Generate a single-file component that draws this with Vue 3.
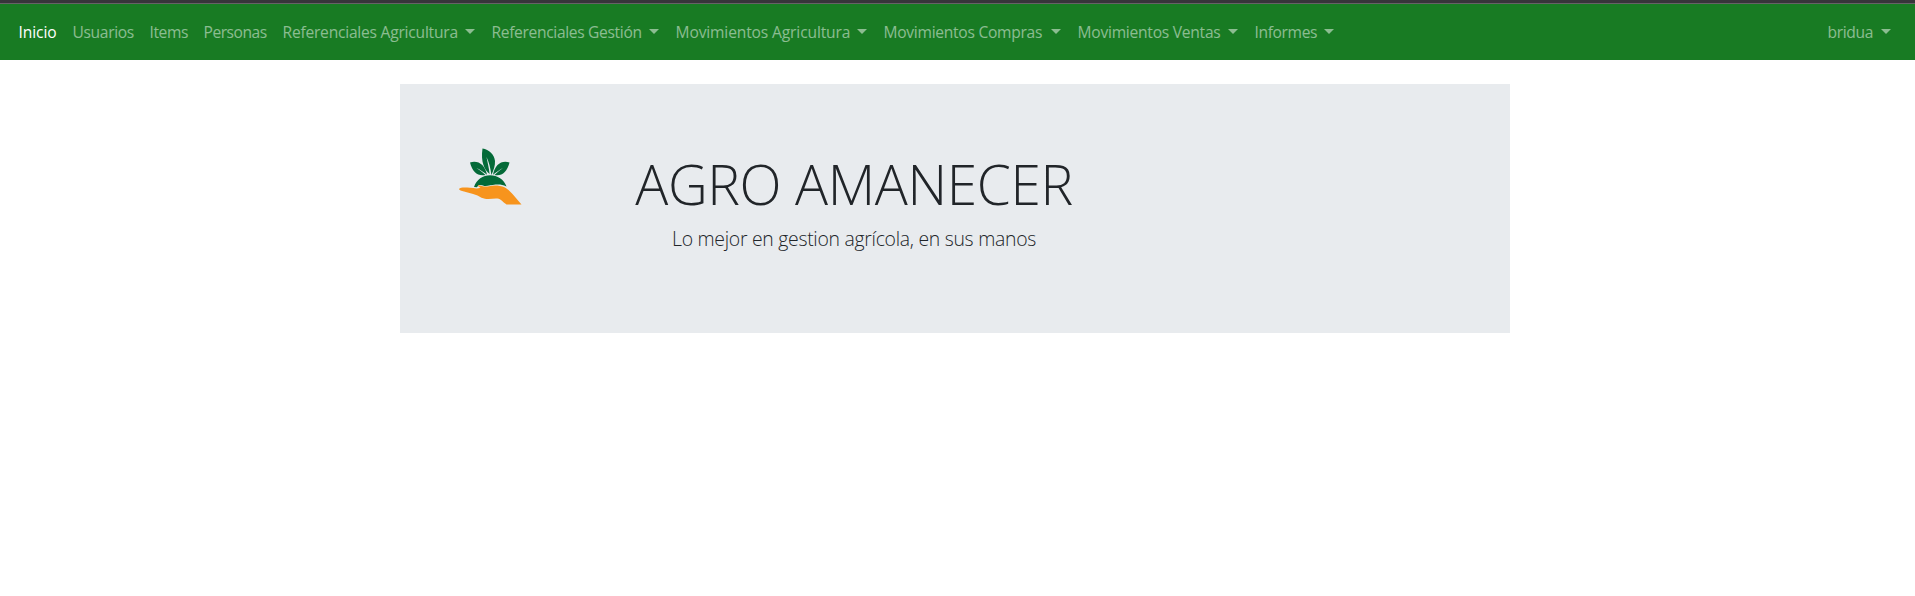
<script setup>
const links = [
  { text: 'Inicio', width: 38, spacing: -0.08, active: true },
  { text: 'Usuarios', width: 61, spacing: -0.35 },
  { text: 'Items', width: 38, spacing: -0.4 },
  { text: 'Personas', width: 63, spacing: -0.48 },
  { text: 'Referenciales Agricultura', width: 193, spacing: -0.23, menu: true },
  { text: 'Referenciales Gestión', width: 168, spacing: -0.34, menu: true },
  { text: 'Movimientos Agricultura', width: 192, spacing: -0.14, menu: true },
  { text: 'Movimientos Compras', width: 178, spacing: -0.28, menu: true },
  { text: 'Movimientos Ventas', width: 161, spacing: -0.25, menu: true },
  { text: 'Informes', width: 80, spacing: -0.36, menu: true },
]
</script>

<template>
  <div class="page">
    <nav class="navbar">
      <ul class="links">
        <li v-for="l in links" :key="l.text" class="item" :class="{ active: l.active }" :style="{ width: l.width + 'px', letterSpacing: l.spacing + 'px' }">
          <span>{{ l.text }}</span><i v-if="l.menu" class="caret"></i>
        </li>
      </ul>
      <div class="item user"><span>bridua</span><i class="caret"></i></div>
    </nav>
    <main class="hero">
      <svg class="logo" viewBox="0 0 66 58" width="66" height="58">
        <g fill="#046a38">
          <path d="M24.500 0.500C31 1.500 36.500 6.500 37 13C37.300 18 35.500 22 33.400 27C32.500 20 31 14 28.500 9C29.500 14 31 20 31.600 26C26.500 22 22.500 14 24.500 0.500Z" />
          <path d="M12 14.500C20 12 27 16.500 29 26.800C25.500 24 22 21.500 18.500 20C22 22.500 25 24.500 27.500 27C19.500 28.500 14.500 24 12 14.500Z" />
          <path d="M51.500 14.500C43.500 12 37 16.500 35 26.800C38.500 24 42 21.500 45 20C41.500 22.500 39 24.500 36.500 27C44 28.500 49 24 51.500 14.500Z" />
          <path d="M16 39C18.500 31.500 25 27.300 32 27.300C39.500 27.300 46 31.500 48.500 38.500C44.500 36.500 41 36.200 37.500 36.600C33 37 30 38.300 26.500 38C23 37 20.500 36 19 39.300Z" />
        </g>
        <path d="M1 41C2.500 39.200 7 39.500 12 39.800C16 40 19 41.200 22.500 39.500C20.500 38.500 19.500 38.200 20.200 37.200C23 37.600 27 39.200 31 38.200C36 36.800 42 37.400 46.500 39.200C50 41 52 43.500 54.500 46L63.500 56.500H48.500C45 54.500 43 51 39.500 50.600C35 50.200 29 52 23.500 49.700C18.500 46.500 12 45 6 43.500C3.500 43 1 42.300 1 41Z" fill="#f7941d" />
      </svg>
      <div class="copy">
        <h1>AGRO AMANECER</h1>
        <p>Lo mejor en gestion agrícola, en sus manos</p>
      </div>
    </main>
  </div>
</template>

<style scoped>
.page {
  min-height: 596px;
  background: #fff;
  font-family: "Open Sans", "Noto Sans", sans-serif;
}
.navbar {
  box-sizing: border-box;
  height: 60px;
  border-top: 3px solid #37353a;
  box-shadow: inset 0 1px #666266;
  background: #187b23;
  display: flex;
  justify-content: space-between;
  padding: 1px 24px 0 18px;
}
.links {
  display: flex;
  gap: 16px;
  list-style: none;
  margin: 0;
  padding: 0;
}
.item {
  display: flex;
  align-items: center;
  justify-content: space-between;
  height: 56px;
  font-size: 15.6px;
  letter-spacing: -0.35px;
  white-space: nowrap;
  color: rgba(255, 255, 255, 0.5);
}
.item span {
  margin-left: 0.5px;
}
.active {
  color: #fff;
}
.user {
  width: 64px;
}
.caret {
  border: 5px solid transparent;
  border-top-color: currentColor;
  border-bottom: 0;
  margin-top: -2px;
}
.hero {
  box-sizing: border-box;
  width: 1110px;
  height: 249px;
  margin: 24px 0 0 400px;
  padding: 64px 58px;
  background: #e8ebee;
  display: flex;
  color: #212529;
}
.logo {
  flex: none;
}
.copy {
  width: 460px;
  margin-left: 100px;
  text-align: center;
  white-space: nowrap;
  font-weight: 300;
}
h1 {
  margin: 2px 0 7px;
  font-size: 55px;
  line-height: 67px;
  font-weight: 300;
  letter-spacing: -0.4px;
}
p {
  margin: 0;
  font-size: 19.4px;
  line-height: 30px;
  letter-spacing: -0.28px;
}
</style>
